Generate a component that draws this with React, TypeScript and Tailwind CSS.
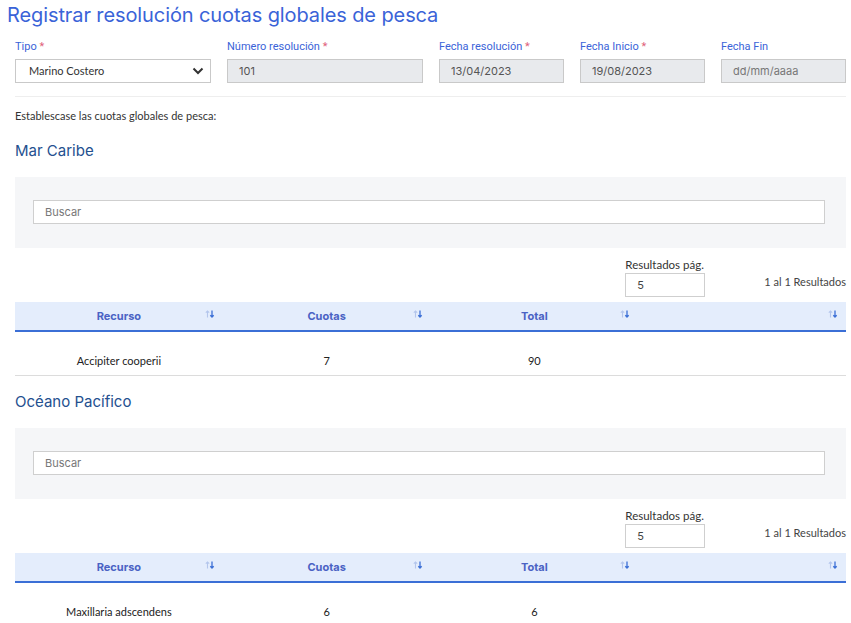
import React from "react";

const SortIcon = () => (
  <svg width="10" height="8" viewBox="0 0 10 8" className="shrink-0">
    <path d="M2.5 7.5V1M0.8 2.7L2.5 1L4.2 2.7" stroke="#b4c6ec" strokeWidth="1.1" fill="none" />
    <path d="M7 0.5V7M5.3 5.3L7 7L8.7 5.3" stroke="#3b6fd6" strokeWidth="1.3" fill="none" />
  </svg>
);

const Req = () => <span className="text-[#e0627a]"> *</span>;

const body = { fontFamily: 'Lato, "Liberation Sans", sans-serif' };
const mont = { fontFamily: 'Inter, "Liberation Sans", sans-serif' };
const cond = { fontFamily: 'Roboto, "Liberation Sans", sans-serif' };

function Field({ label, req, value, placeholder }: { label: string; req?: boolean; value?: string; placeholder?: boolean }) {
  return (
    <div className="flex flex-col">
      <div className="h-[19px] text-[11px] leading-[19px] text-[#3a63d8] mt-[37px]" style={cond}>
        {label}
        {req && <Req />}
      </div>
      <div
        className={`h-[24px] mt-[3px] border border-[#c9c9c9] bg-[#e8eaed] flex items-center px-[11px] text-[11px] ${placeholder ? "text-[#777]" : "text-[#555]"}`}
        style={mont}
      >
        {value}
      </div>
    </div>
  );
}

function Section({ title, recurso, cuotas, total }: { title: string; recurso: string; cuotas: string; total: string }) {
  return (
    <div>
      <div className="h-[26px] flex items-center text-[15px] text-[#24508f]" style={mont}>
        {title}
      </div>
      <div className="mt-[13px] h-[71px] bg-[#f5f6f8] pt-[23px] pl-[18px] pr-[21px]">
        <div className="h-[24px] bg-white border border-[#cfcfcf] flex items-center px-[11px] text-[11px] text-[#777]" style={mont}>
          Buscar
        </div>
      </div>
      <div className="flex justify-end mt-[9px] h-[45px]">
        <div className="flex flex-col">
          <div className="h-[15px] text-[11.5px] leading-[15px] text-[#333]" style={body}>Resultados pág.</div>
          <div className="mt-[1px] w-[80px] h-[24px] border border-[#cfcfcf] flex items-center px-[11px] text-[11px] text-[#444]" style={mont}>
            5
          </div>
        </div>
        <div className="ml-[59px] pt-[17px] text-[11px] text-[#444] leading-[15px]" style={body}>1 al 1 Resultados</div>
      </div>
      <div className="grid grid-cols-4 h-[30px] bg-[#e4edfc] border-b-2 border-[#3b6fd6]">
        {["Recurso", "Cuotas", "Total", ""].map((h, i) => (
          <div key={i} className="relative flex items-center justify-center">
            <span className="text-[11px] font-bold text-[#4a62c4]" style={mont}>{h}</span>
            <span className="absolute right-[8px] top-[8px]"><SortIcon /></span>
          </div>
        ))}
      </div>
      <div className="grid grid-cols-4 h-[44px] border-b border-[#dcdcdc] text-[11px] text-[#222]" style={body}>
        <div className="flex items-end pb-[6px] justify-center">{recurso}</div>
        <div className="flex items-end pb-[6px] justify-center">{cuotas}</div>
        <div className="flex items-end pb-[6px] justify-center">{total}</div>
        <div />
      </div>
    </div>
  );
}

export default function App() {
  return (
    <div className="w-[851px] h-[623px] overflow-hidden bg-white pl-[15px] pr-[5px]" style={body}>
      <div className="-ml-[8px] h-[30px] flex items-center text-[20px] tracking-[-0.1px] text-[#3a63d8]" style={mont}>
        Registrar resolución cuotas globales de pesca
      </div>
      <div className="-mt-[30px] grid grid-cols-[196px_196px_125px_125px_125px] gap-x-[16px]">
        <div className="flex flex-col">
          <div className="h-[19px] text-[11px] leading-[19px] text-[#3a63d8] mt-[37px]" style={cond}>
            Tipo<Req />
          </div>
          <div className="h-[24px] mt-[3px] border border-[#c9c9c9] bg-white flex items-center justify-between pl-[13px] pr-[6px] text-[11px] text-[#333]" style={body}>
            <span>Marino Costero</span>
            <svg width="12" height="8" viewBox="0 0 12 8"><path d="M1.5 1.5L6 6L10.5 1.5" stroke="#333" strokeWidth="2" fill="none" /></svg>
          </div>
        </div>
        <Field label="Número resolución" req value="101" />
        <Field label="Fecha resolución" req value="13/04/2023" />
        <Field label="Fecha Inicio" req value="19/08/2023" />
        <Field label="Fecha Fin" value="dd/mm/aaaa" placeholder />
      </div>
      <div className="mt-[13px] border-t border-[#eeeeee]" />
      <div className="mt-[11px] h-[15px] text-[11px] leading-[15px] text-[#333]">Establescase las cuotas globales de pesca:</div>
      <div className="mt-[15px]">
        <Section title="Mar Caribe" recurso="Accipiter cooperii" cuotas="7" total="90" />
      </div>
      <div className="mt-[13px]">
        <Section title="Océano Pacífico" recurso="Maxillaria adscendens" cuotas="6" total="6" />
      </div>
    </div>
  );
}
